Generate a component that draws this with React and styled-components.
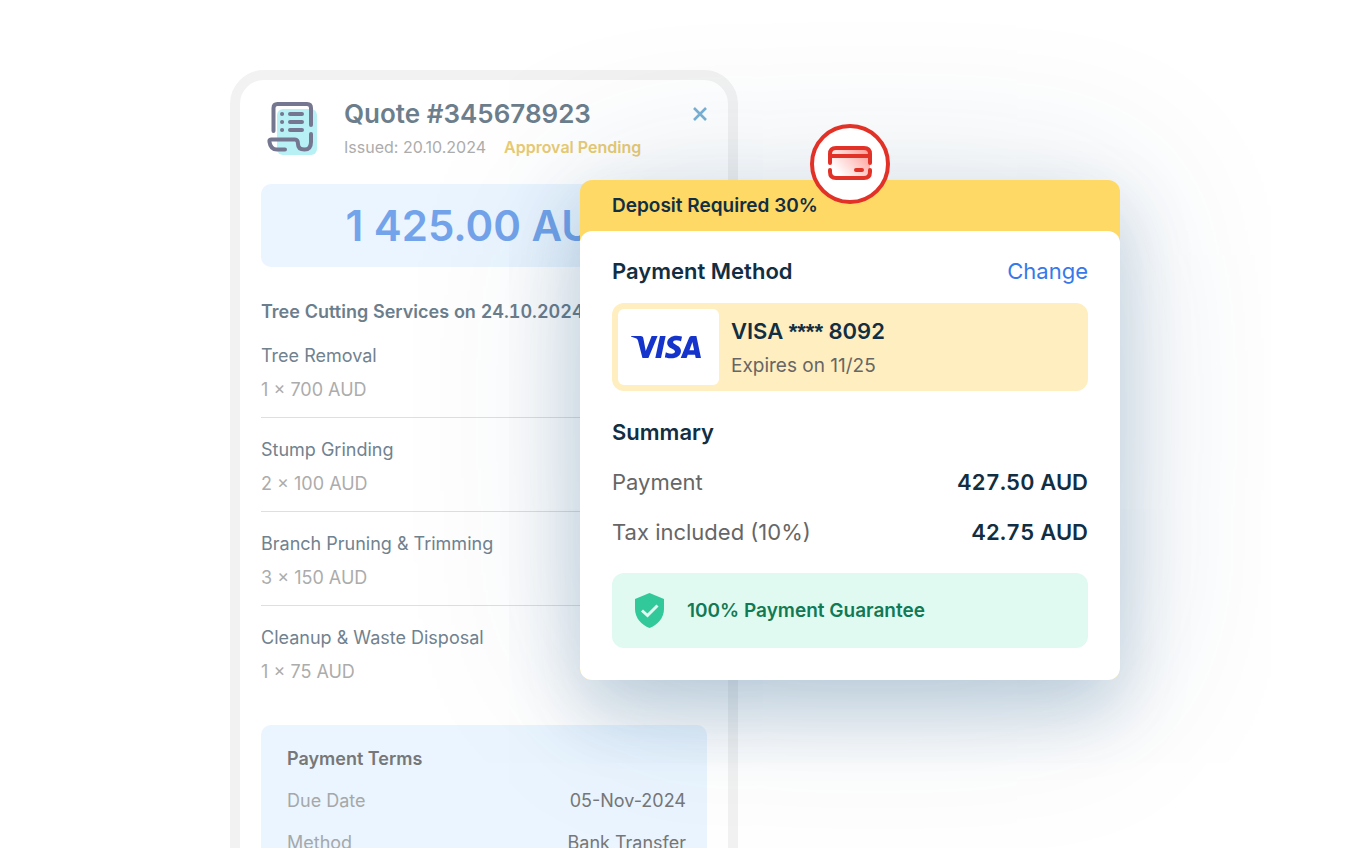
import React from 'react';
import styled, { createGlobalStyle } from 'styled-components';

const GlobalStyle = createGlobalStyle`
  *, *::before, *::after {
    box-sizing: border-box;
  }
  body {
    margin: 0;
    background: #fff;
    font-family: Inter, 'Liberation Sans', sans-serif;
  }
  h1, h2, h3, p, ul, dl, dd {
    margin: 0;
    padding: 0;
  }
  button {
    padding: 0;
    border: none;
    background: none;
    font-family: inherit;
    cursor: pointer;
  }
`;

const Page = styled.main`
  height: 100vh;
  overflow: hidden;
  padding-top: 70px;
`;

const Stage = styled.div`
  display: grid;
  grid-template-columns: 350fr 158fr 382fr 10fr;
  align-items: start;
  max-width: 900px;
  margin: 0 auto;
`;

const Quote = styled.article`
  grid-area: 1 / 1 / 2 / 3;
  border: 10px solid #f2f2f2;
  border-radius: 34px;
  background-color: #fff;
  padding: 18px 21px 40px;
`;

const QuoteHeader = styled.header`
  display: grid;
  grid-template-columns: auto 1fr auto;
  align-items: start;
  padding-left: 4px;

  .scroll-icon {
    margin-top: 2px;
    margin-right: 25px;
  }
  .close-btn {
    height: 32px;
    color: #7ab1d3;
  }
  svg {
    display: block;
  }
`;

const QuoteTitle = styled.h1`
  color: #6c7e8c;
  font-size: 26px;
  font-weight: 600;
  line-height: 32px;
`;

const QuoteMeta = styled.p`
  display: flex;
  gap: 18px;
  color: #acacac;
  font-size: 16px;
  line-height: 34px;

  strong {
    color: #e9cb72;
    font-weight: 600;
  }
`;

const Amount = styled.p`
  margin-top: 20px;
  border-radius: 10px;
  background-color: #eaf5ff;
  color: #73a3ea;
  font-size: 42px;
  font-weight: 600;
  line-height: 83px;
  text-align: center;
`;

const ServicesTitle = styled.h2`
  margin-top: 32px;
  color: #6c7e8c;
  font-size: 18px;
  font-weight: 600;
  font-variant-numeric: tabular-nums;
  line-height: 26px;
  white-space: nowrap;
`;

const Services = styled.ul`
  list-style: none;

  li {
    padding: 15px 0 10px;
    color: #acacac;
    font-size: 18px;
    line-height: 34px;
  }
  li:first-child {
    padding-top: 14px;
  }
  li + li {
    border-top: 1px solid #cce5f5;
  }
  .service-name {
    color: #71828f;
  }
`;

const Terms = styled.section`
  margin-top: 26px;
  border-radius: 10px;
  background-color: #eaf5ff;
  padding: 13px 21px 20px 26px;
  color: #777;
  font-size: 18px;
  line-height: 42px;

  h2 {
    font-size: 18px;
    font-weight: 600;
  }
  dl div {
    display: flex;
    justify-content: space-between;
  }
  dt {
    color: #a5a8aa;
  }
`;

const Deposit = styled.section`
  grid-area: 1 / 2 / 2 / 4;
  position: relative;
  margin-top: 110px;
  border-radius: 12px;
  background-color: #ffd966;
  box-shadow: 0 30px 70px rgba(0, 67, 125, 0.22),
    0 10px 180px rgba(0, 67, 115, 0.16);
  color: #122e42;
`;

const Badge = styled.div`
  position: absolute;
  top: -56px;
  left: 50%;
  display: grid;
  place-items: center;
  width: 80px;
  height: 80px;
  margin-left: -40px;
  border: 4px solid #e23228;
  border-radius: 50%;
  background-color: #fff;
`;

const DepositTitle = styled.h2`
  padding: 0 32px;
  font-size: 19px;
  font-weight: 600;
  line-height: 51px;
`;

const DepositBody = styled.div`
  border-radius: 12px;
  background-color: #fff;
  padding: 25px 32px 32px;
`;

const SectionHead = styled.div`
  display: flex;
  justify-content: space-between;
  font-size: 22px;
  line-height: 30px;

  h3 {
    font-size: 22px;
    font-weight: 600;
  }
  button {
    color: #3579ea;
    font-size: 22px;
  }
`;

const PayCard = styled.div`
  display: flex;
  align-items: center;
  gap: 12px;
  margin: 17px 0 26px;
  border-radius: 12px;
  background-color: #ffeebf;
  padding: 6px;

  .card-number {
    padding-top: 2px;
    font-size: 22px;
    font-weight: 600;
    line-height: 34px;
  }
  .card-mask {
    font-family: 'Liberation Sans', sans-serif;
  }
  .card-expiry {
    color: #666;
    font-size: 19px;
    line-height: 34px;
  }
`;

const CardLogo = styled.div`
  display: grid;
  place-items: center;
  width: 101px;
  height: 76px;
  border-radius: 6px;
  background-color: #fff;
  padding-right: 6px;
`;

const Totals = styled.dl`
  margin-top: 10px;
  font-size: 22px;
  line-height: 50px;

  div {
    display: flex;
    justify-content: space-between;
  }
  dt {
    color: #666;
  }
  dd {
    font-weight: 600;
    font-variant-numeric: tabular-nums;
  }
`;

const Guarantee = styled.p`
  display: flex;
  align-items: center;
  gap: 23px;
  margin-top: 16px;
  border-radius: 12px;
  background-color: #e0faf1;
  padding: 0 23px;
  color: #107a56;
  font-size: 19px;
  font-weight: 600;
  line-height: 75px;
`;

const services = [
  { name: 'Tree Removal', qty: 1, price: 700 },
  { name: 'Stump Grinding', qty: 2, price: 100 },
  { name: 'Branch Pruning & Trimming', qty: 3, price: 150 },
  { name: 'Cleanup & Waste Disposal', qty: 1, price: 75 },
];

const terms = [
  ['Due Date', '05-Nov-2024'],
  ['Method', 'Bank Transfer'],
];

const totals = [
  ['Payment', '427.50 AUD'],
  ['Tax included (10%)', '42.75 AUD'],
];

const ScrollIcon = () => (
  <svg className='scroll-icon' width='54' height='58' viewBox='0 0 54 58' fill='none' aria-hidden='true'>
    <rect x='12' y='9' width='40' height='46' rx='6' fill='#b8f1f5' />
    <g stroke='#757790' strokeWidth='4' strokeLinecap='round' strokeLinejoin='round'>
      <path d='M8.500 31V8Q8.500 4 12.500 4H42Q46 4 46 8V25' />
      <path d='M46 34V42Q46 49.500 39.500 49.500Q33 49.500 33 44Q33 39.500 30 39.500H6Q4 39.500 4.500 42Q5.500 49.500 12 49.500H20' />
      <path d='M25 14H37M25 22H37M25 30H37' />
      <path d='M17 14H17.100M17 22H17.100M17 30H17.100' />
    </g>
  </svg>
);

const CloseIcon = () => (
  <svg width='14' height='14' viewBox='0 0 14 14' aria-hidden='true'>
    <path d='M1 1L13 13M13 1L1 13' stroke='currentColor' strokeWidth='2.600' />
  </svg>
);

const CreditCardIcon = () => (
  <svg width='46' height='36' viewBox='0 1 46 36' fill='none' aria-hidden='true'>
    <defs>
      <linearGradient id='cardFill' x1='6' y1='32' x2='38' y2='4' gradientUnits='userSpaceOnUse'>
        <stop offset='0.150' stopColor='#fff' />
        <stop offset='1' stopColor='#ffa09a' />
      </linearGradient>
    </defs>
    <rect x='3' y='3' width='40' height='30' rx='5' fill='url(#cardFill)' />
    <g stroke='#e23228' strokeWidth='4' strokeLinecap='round'>
      <path d='M3 18V9Q3 3 9 3H37Q43 3 43 9V18' />
      <path d='M3 25V27Q3 33 9 33H37Q43 33 43 27V25' />
      <path d='M4 11H42' strokeLinecap='butt' />
      <path d='M29 25H35' />
    </g>
  </svg>
);

const VisaLogo = () => (
  <svg width='70' height='24' viewBox='0 0 1000 324' role='img' aria-label='Visa'>
    <path
      fill='#1434cb'
      d='M651.190.500c-70.930 0-134.320 36.770-134.320 104.690 0 77.900 112.420 83.280 112.420 122.420 0 16.480-18.880 31.230-51.140 31.230-45.770 0-79.980-20.610-79.980-20.610l-14.640 68.550s39.410 17.410 91.730 17.410c77.550 0 138.580-38.570 138.580-107.660 0-82.320-112.890-87.540-112.890-123.860 0-12.910 15.500-27.050 47.660-27.050 36.290 0 65.890 14.990 65.890 14.990l14.330-66.200S696.610.500 651.180.500zM2.220 5.500L.500 15.490s29.840 5.460 56.720 16.360c34.610 12.490 37.070 19.770 42.900 42.350l63.510 244.830h85.140L379.930 5.500h-84.940L210.710 218.670l-34.390-180.700c-3.150-20.680-19.130-32.480-38.680-32.480H2.230zm411.870 0l-66.630 313.530h81L494.850 5.490h-80.760zm451.760 0c-19.530 0-29.880 10.460-37.470 28.730L709.700 319.020h84.940l16.430-47.470h103.480l9.990 47.470H999.500L934.120 5.500h-68.270zm11.050 84.710l25.180 117.650h-67.450z'
    />
  </svg>
);

const ShieldIcon = () => (
  <svg width='29' height='35' viewBox='0 0 29 35' aria-hidden='true'>
    <path d='M14.500 0L29 6V16C29 25 22.500 32 14.500 35C6.500 32 0 25 0 16V6Z' fill='#32c99a' />
    <path d='M7 17.500L12.500 22.500L22.500 12.500' fill='none' stroke='#e0faf1' strokeWidth='3' />
  </svg>
);

const App = () => {
  return (
    <Page>
      <GlobalStyle />
      <Stage>
        <Quote>
          <QuoteHeader>
            <ScrollIcon />
            <div>
              <QuoteTitle>Quote #345678923</QuoteTitle>
              <QuoteMeta>
                <span>Issued: 20.10.2024</span>
                <strong>Approval Pending</strong>
              </QuoteMeta>
            </div>
            <button type='button' className='close-btn' aria-label='Close'>
              <CloseIcon />
            </button>
          </QuoteHeader>
          <Amount>1 425.00 AUD</Amount>
          <ServicesTitle>Tree Cutting Services on 24.10.2024</ServicesTitle>
          <Services>
            {services.map(({ name, qty, price }) => (
              <li key={name}>
                <p className='service-name'>{name}</p>
                <p>
                  {qty} × {price} AUD
                </p>
              </li>
            ))}
          </Services>
          <Terms>
            <h2>Payment Terms</h2>
            <dl>
              {terms.map(([label, value]) => (
                <div key={label}>
                  <dt>{label}</dt>
                  <dd>{value}</dd>
                </div>
              ))}
            </dl>
          </Terms>
        </Quote>
        <Deposit>
          <Badge>
            <CreditCardIcon />
          </Badge>
          <DepositTitle>Deposit Required 30%</DepositTitle>
          <DepositBody>
            <SectionHead>
              <h3>Payment Method</h3>
              <button type='button'>Change</button>
            </SectionHead>
            <PayCard>
              <CardLogo>
                <VisaLogo />
              </CardLogo>
              <div>
                <p className='card-number'>
                  VISA <span className='card-mask'>****</span> 8092
                </p>
                <p className='card-expiry'>Expires on 11/25</p>
              </div>
            </PayCard>
            <SectionHead>
              <h3>Summary</h3>
            </SectionHead>
            <Totals>
              {totals.map(([label, value]) => (
                <div key={label}>
                  <dt>{label}</dt>
                  <dd>{value}</dd>
                </div>
              ))}
            </Totals>
            <Guarantee>
              <ShieldIcon />
              100% Payment Guarantee
            </Guarantee>
          </DepositBody>
        </Deposit>
      </Stage>
    </Page>
  );
};

export default App;
